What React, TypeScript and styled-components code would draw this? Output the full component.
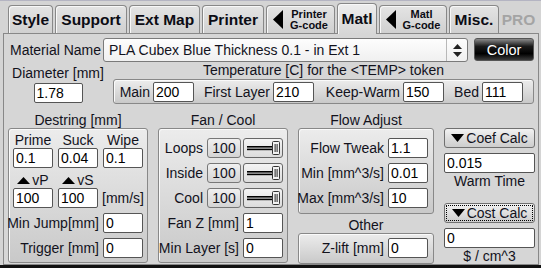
import * as React from "react";
import styled, { createGlobalStyle } from "styled-components";

const GlobalStyle = createGlobalStyle`
  html, body {
    margin: 0;
    padding: 0;
    background: #d4d4d4;
  }
  * {
    box-sizing: border-box;
  }
`;

const TEXT = "#12121c";

function LeftArrow() {
  return (
    <svg width="11" height="19" viewBox="0 0 11 19">
      <polygon points="10,0 10,19 0,9.5" fill="#000" />
    </svg>
  );
}

function DownTri() {
  return (
    <svg width="13" height="8" viewBox="0 0 13 8">
      <polygon points="0,0 13,0 6.5,8" fill="#000" />
    </svg>
  );
}

function UpTri() {
  return (
    <svg width="13" height="7" viewBox="0 0 13 7">
      <polygon points="0,7 13,7 6.5,0" fill="#000" />
    </svg>
  );
}

function SpinArrows() {
  return (
    <svg width="9" height="13" viewBox="0 0 9 13">
      <polygon points="0,5 9,5 4.5,0" fill="#222" />
      <polygon points="0,8 9,8 4.5,13" fill="#222" />
    </svg>
  );
}

function SliderGlyph() {
  return (
    <svg width="38" height="18" viewBox="0 0 38 18">
      <rect x="3" y="7" width="27" height="1.6" fill="#000" />
      <rect x="3" y="9.6" width="27" height="1.6" fill="#000" />
      <rect x="28.5" y="2.5" width="7" height="13" rx="1" fill="#f2f2f2" stroke="#333" />
      <rect x="30.6" y="5" width="1" height="8" fill="#222" />
      <rect x="32.6" y="5" width="1" height="8" fill="#222" />
    </svg>
  );
}

function App() {
  return (
    <>
      <GlobalStyle />
      <Window>
        <TabBar>
          <Tab $w={45}>Style</Tab>
          <Tab $w={72}>Support</Tab>
          <Tab $w={71}>Ext Map</Tab>
          <Tab $w={62}>Printer</Tab>
          <Tab $w={69}>
            <LeftArrow />
            <TabLines>
              <span>Printer</span>
              <span>G-code</span>
            </TabLines>
          </Tab>
          <Tab $w={40} $active>Matl</Tab>
          <Tab $w={68}>
            <LeftArrow />
            <TabLines>
              <span>Matl</span>
              <span>G-code</span>
            </TabLines>
          </Tab>
          <Tab $w={50}>Misc.</Tab>
          <Tab $w={35} $disabled>PRO</Tab>
        </TabBar>

        <Panel>
          <MaterialRow>
            <RowLabel>Material Name</RowLabel>
            <Select>
              <SelectText>PLA Cubex Blue Thickness 0.1 - in Ext 1</SelectText>
              <SelectArrows>
                <SpinArrows />
              </SelectArrows>
            </Select>
            <ColorButton>Color</ColorButton>
          </MaterialRow>

          <TopRow>
            <DiameterCol>
              <Caption>Diameter [mm]</Caption>
              <Field $w={49} $mt={2} value="1.78" readOnly />
            </DiameterCol>
            <TempCol>
              <Caption>Temperature [C] for the &lt;TEMP&gt; token</Caption>
              <TempBox>
                <TempField $w={76}>
                  Main <Field $w={41} value="200" readOnly />
                </TempField>
                <TempField $w={120}>
                  First Layer <Field $w={41} value="210" readOnly />
                </TempField>
                <TempField $w={130}>
                  Keep-Warm <Field $w={41} value="150" readOnly />
                </TempField>
                <TempField $w={79}>
                  Bed <Field $w={41} value="111" readOnly />
                </TempField>
              </TempBox>
            </TempCol>
          </TopRow>

          <Groups>
            <Column>
              <GroupTitle>Destring [mm]</GroupTitle>
              <DestringBox $h={135}>
                <TripleRow $h={16}>
                  <span>Prime</span>
                  <span>Suck</span>
                  <span>Wipe</span>
                </TripleRow>
                <TripleRow $h={20}>
                  <Field $w={40} value="0.1" readOnly />
                  <Field $w={40} value="0.04" readOnly />
                  <Field $w={40} value="0.1" readOnly />
                </TripleRow>
                <TripleRow $h={16} $mt={4}>
                  <Speed><UpTri />vP</Speed>
                  <Speed><UpTri />vS</Speed>
                  <span />
                </TripleRow>
                <TripleRow $h={20}>
                  <Field $w={40} value="100" readOnly />
                  <Field $w={40} value="100" readOnly />
                  <span>[mm/s]</span>
                </TripleRow>
                <LabelRow $mt={5}>
                  Min Jump[mm] <Field $w={40} value="0" readOnly />
                </LabelRow>
                <LabelRow $mt={5}>
                  Trigger [mm] <Field $w={40} value="0" readOnly />
                </LabelRow>
              </DestringBox>
            </Column>

            <Column>
              <GroupTitle>Fan / Cool</GroupTitle>
              <FanBox $h={135}>
                {["Loops", "Inside", "Cool"].map((name, i) => (
                  <LabelRow key={name} $mt={i === 0 ? 0 : 5}>
                    {name}
                    <ValueBox>100</ValueBox>
                    <Slider>
                      <SliderGlyph />
                    </Slider>
                  </LabelRow>
                ))}
                <LabelRow $mt={5}>
                  Fan Z [mm] <Field $w={40} value="1" readOnly />
                </LabelRow>
                <LabelRow $mt={5}>
                  Min Layer [s] <Field $w={40} value="0" readOnly />
                </LabelRow>
              </FanBox>
            </Column>

            <Column>
              <GroupTitle>Flow Adjust</GroupTitle>
              <FlowBox $h={86}>
                <LabelRow>
                  Flow Tweak <Field $w={40} value="1.1" readOnly />
                </LabelRow>
                <LabelRow $mt={5}>
                  Min [mm^3/s] <Field $w={40} value="0.01" readOnly />
                </LabelRow>
                <LabelRow $mt={5}>
                  Max [mm^3/s] <Field $w={40} value="10" readOnly />
                </LabelRow>
              </FlowBox>
              <GroupTitle $mt={3}>Other</GroupTitle>
              <OtherBox $h={31}>
                <LabelRow>
                  Z-lift [mm] <Field $w={40} value="0" readOnly />
                </LabelRow>
              </OtherBox>
            </Column>

            <RightCol>
              <CalcButton>
                <DownTri />Coef Calc
              </CalcButton>
              <Field $w={91} $mt={5} value="0.015" readOnly />
              <Caption>Warm Time</Caption>
              <CalcButton $focus $mt={14}>
                <DownTri />Cost Calc
              </CalcButton>
              <Field $w={91} $mt={5} value="0" readOnly />
              <Caption>$ / cm^3</Caption>
            </RightCol>
          </Groups>
        </Panel>
      </Window>
    </>
  );
}

const Window = styled.div`
  width: 541px;
  height: 268px;
  overflow: hidden;
  background: #d4d4d4;
  border-top: 1px solid #b4b4c2;
  border-bottom: 3px solid #111;
  font-family: "Liberation Sans", Arial, sans-serif;
  font-size: 14px;
  color: ${TEXT};
`;

const TabBar = styled.div`
  display: flex;
  align-items: flex-end;
  gap: 2px;
  height: 32px;
  padding-left: 8px;
`;

const Tab = styled.div<{ $w: number; $active?: boolean; $disabled?: boolean }>`
  position: relative;
  z-index: ${(p) => (p.$active ? 1 : 0)};
  width: ${(p) => p.$w}px;
  height: ${(p) => (p.$active ? 31 : 28)}px;
  margin-bottom: ${(p) => (p.$active ? -1 : 0)}px;
  display: flex;
  align-items: center;
  justify-content: center;
  gap: 6px;
  padding: 0 2px;
  border: 1px solid ${(p) => (p.$disabled ? "transparent" : "#888")};
  border-bottom: none;
  border-radius: 4px 4px 0 0;
  background: ${(p) =>
    p.$disabled
      ? "transparent"
      : p.$active
      ? "linear-gradient(#eeeeee, #d6d6d6)"
      : "linear-gradient(#e4e4e4, #d0d0d0)"};
  box-shadow: ${(p) => (p.$disabled ? "none" : "inset 1px 1px 0 #f8f8f8")};
  font-weight: bold;
  font-size: 15.5px;
  color: ${(p) => (p.$disabled ? "#a4a4a4" : "#0c0c14")};
  white-space: nowrap;
`;

const TabLines = styled.div`
  display: flex;
  flex-direction: column;
  align-items: center;
  font-size: 11px;
  line-height: 11px;
`;

const Panel = styled.div`
  margin-left: 3px;
  width: 536px;
  height: 232px;
  border: 1px solid #888;
  background: #d6d6d6;
  padding: 4px 4px 0 4px;
  display: flex;
  flex-direction: column;
`;

const MaterialRow = styled.div`
  display: flex;
  align-items: center;
  height: 24px;
`;

const RowLabel = styled.div`
  width: 95px;
  padding-left: 2px;
  white-space: nowrap;
`;

const Select = styled.div`
  flex: 1;
  height: 24px;
  display: flex;
  align-items: center;
  border: 1px solid #7a7a7a;
  border-radius: 3px;
  background: linear-gradient(#fdfdfd, #f0f0f0);
`;

const SelectText = styled.div`
  flex: 1;
  padding-left: 5px;
  white-space: nowrap;
`;

const SelectArrows = styled.div`
  width: 21px;
  height: 100%;
  display: flex;
  align-items: center;
  justify-content: center;
  border-left: 1px solid #b8b8b8;
`;

const ColorButton = styled.div`
  width: 60px;
  height: 23px;
  margin-left: 6px;
  margin-bottom: 1px;
  display: flex;
  align-items: center;
  justify-content: center;
  border: 1px solid #555;
  border-radius: 3px;
  background: linear-gradient(#8a8a8a 0%, #1a1a1a 35%, #000 70%, #3a3a3a 100%);
  color: #fff;
  font-size: 14.5px;
`;

const TopRow = styled.div`
  display: flex;
  gap: 5px;
  height: 42px;
`;

const DiameterCol = styled.div`
  width: 100px;
  display: flex;
  flex-direction: column;
  align-items: center;
  padding-top: 3px;
`;

const TempCol = styled.div`
  width: 421px;
  display: flex;
  flex-direction: column;
  align-items: center;
`;

const Caption = styled.div`
  height: 16px;
  line-height: 16px;
  text-align: center;
  white-space: nowrap;
`;

const Box = styled.div<{ $h: number }>`
  height: ${(p) => p.$h}px;
  border: 1px solid #888;
  border-radius: 3px;
  background: linear-gradient(#ececec, #d9d9d9 55%, #c9c9c9);
  box-shadow: inset 1px 1px 0 #fafafa;
`;

const TempBox = styled(Box).attrs({ $h: 25 })`
  width: 100%;
  margin-top: 1px;
  display: flex;
  align-items: center;
  padding-left: 4px;
`;

const TempField = styled.div<{ $w: number }>`
  width: ${(p) => p.$w}px;
  display: flex;
  align-items: center;
  justify-content: flex-end;
  gap: 3px;
  white-space: nowrap;
`;

const Field = styled.input<{ $w: number; $mt?: number }>`
  width: ${(p) => p.$w}px;
  height: 20px;
  margin: ${(p) => p.$mt || 0}px 0 0 0;
  padding: 0 2px;
  border: 1px solid #555;
  border-radius: 2px;
  background: #fff;
  font: inherit;
  color: #000;
  outline: none;
  flex-shrink: 0;
`;

const Groups = styled.div`
  display: grid;
  grid-template-columns: 140px 130px 136px 91px;
  column-gap: 10px;
`;

const Column = styled.div`
  display: flex;
  flex-direction: column;
`;

const GroupTitle = styled(Caption)<{ $mt?: number }>`
  margin-top: ${(p) => (p.$mt === undefined ? 8 : p.$mt)}px;
`;

const DestringBox = styled(Box)`
  padding: 3px 4px 0 4px;
`;

const TripleRow = styled.div<{ $h: number; $mt?: number }>`
  display: grid;
  grid-template-columns: repeat(3, 40px);
  column-gap: 5px;
  height: ${(p) => p.$h}px;
  margin-top: ${(p) => p.$mt || 0}px;
  align-items: center;
  justify-items: center;
  line-height: 16px;
`;

const Speed = styled.span`
  display: flex;
  align-items: flex-end;
  gap: 2px;
  svg {
    margin-bottom: 4px;
  }
`;

const LabelRow = styled.div<{ $mt?: number }>`
  display: flex;
  align-items: center;
  justify-content: flex-end;
  gap: 4px;
  height: 20px;
  margin-top: ${(p) => p.$mt || 0}px;
  white-space: nowrap;
`;

const FanBox = styled(Box)`
  padding: 9px 4px 0 0;
`;

const ValueBox = styled.div`
  width: 34px;
  height: 20px;
  display: flex;
  align-items: center;
  justify-content: center;
  border: 1px solid #777;
  border-radius: 3px;
  background: linear-gradient(#f0f0f0, #d4d4d4);
`;

const Slider = styled.div`
  width: 40px;
  height: 20px;
  margin-left: -2px;
  display: flex;
  align-items: center;
  justify-content: center;
  border: 1px solid #666;
  border-radius: 3px;
  background: linear-gradient(#f4f4f4, #dcdcdc);
`;

const FlowBox = styled(Box)`
  padding: 9px 5px 0 0;
`;

const OtherBox = styled(Box)`
  padding: 4px 5px 0 0;
`;

const RightCol = styled.div`
  display: flex;
  flex-direction: column;
  padding-top: 24px;
`;

const CalcButton = styled.div<{ $focus?: boolean; $mt?: number }>`
  position: relative;
  height: 20px;
  margin-top: ${(p) => p.$mt || 0}px;
  display: flex;
  align-items: center;
  justify-content: center;
  gap: 2px;
  border: 1px solid #707070;
  border-radius: 3px;
  background: linear-gradient(#f2f2f2, #dedede 50%, #cdcdcd);
  outline: ${(p) => (p.$focus ? "1px dotted #000" : "none")};
  outline-offset: -3px;
  white-space: nowrap;
`;

export default App;
